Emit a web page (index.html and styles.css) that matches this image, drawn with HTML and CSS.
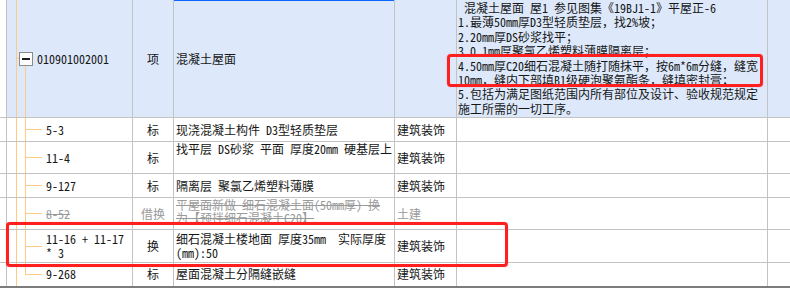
FILE: index.html
```html
<!DOCTYPE html>
<html lang="zh-CN">
<head>
<meta charset="utf-8">
<title>清单</title>
<link rel="stylesheet" href="styles.css">
</head>
<body>
<div class="page">
  <div class="grid">
    <div class="row head">
      <div class="cell gutter"></div>
      <div class="cell code parent"><span class="toggle"><span class="minus"></span></span><span class="code-text">010901002001</span></div>
      <div class="cell type">项</div>
      <div class="cell name active">混凝土屋面</div>
      <div class="cell major"></div>
      <div class="cell desc"><span class="line"> 混凝土屋面 屋1 参见图集《19BJ1-1》平屋正-6</span><span class="line">1.最薄50mm厚D3型轻质垫层，找2%坡；</span><span class="line">2.20mm厚DS砂浆找平；</span><span class="line">3.0.1mm厚聚氯乙烯塑料薄膜隔离层；</span><span class="line">4.50mm厚C20细石混凝土随打随抹平，按6m*6m分缝，缝宽</span><span class="line">10mm，缝内下部填B1级硬泡聚氨酯条，缝填密封膏；</span><span class="line">5.包括为满足图纸范围内所有部位及设计、验收规范规定</span><span class="line">施工所需的一切工序。</span></div>
      <div class="cell extra"></div>
    </div>

    <div class="row">
      <div class="cell gutter"></div>
      <div class="cell code child">5-3</div>
      <div class="cell type">标</div>
      <div class="cell name">现浇混凝土构件 D3型轻质垫层</div>
      <div class="cell major">建筑装饰</div>
      <div class="cell desc"></div>
      <div class="cell extra"></div>
    </div>

    <div class="row">
      <div class="cell gutter"></div>
      <div class="cell code child">11-4</div>
      <div class="cell type">标</div>
      <div class="cell name top">找平层 DS砂浆 平面 厚度20mm 硬基层上</div>
      <div class="cell major">建筑装饰</div>
      <div class="cell desc"></div>
      <div class="cell extra"></div>
    </div>

    <div class="row">
      <div class="cell gutter"></div>
      <div class="cell code child">9-127</div>
      <div class="cell type">标</div>
      <div class="cell name">隔离层 聚氯乙烯塑料薄膜</div>
      <div class="cell major">建筑装饰</div>
      <div class="cell desc"></div>
      <div class="cell extra"></div>
    </div>

    <div class="row muted">
      <div class="cell gutter"></div>
      <div class="cell code child"><span class="struck">8-52</span></div>
      <div class="cell type">借换</div>
      <div class="cell name top tight"><span class="struck">平屋面新做 细石混凝土面(50mm厚) 换<br>为【预拌细石混凝土C20】</span></div>
      <div class="cell major">土建</div>
      <div class="cell desc"></div>
      <div class="cell extra"></div>
    </div>

    <div class="row">
      <div class="cell gutter"></div>
      <div class="cell code child two">11-16 + 11-17<br>* 3</div>
      <div class="cell type">换</div>
      <div class="cell name two">细石混凝土楼地面 厚度35mm  实际厚度<br>(mm):50</div>
      <div class="cell major">建筑装饰</div>
      <div class="cell desc"></div>
      <div class="cell extra"></div>
    </div>

    <div class="row last">
      <div class="cell gutter"></div>
      <div class="cell code child end">9-268</div>
      <div class="cell type">标</div>
      <div class="cell name">屋面混凝土分隔缝嵌缝</div>
      <div class="cell major">建筑装饰</div>
      <div class="cell desc"></div>
      <div class="cell extra"></div>
    </div>
  </div>

  <div class="mark mark-desc"></div>
  <div class="mark mark-row"></div>
</div>
</body>
</html>
```

FILE: styles.css
```css
html, body {
  margin: 0;
  padding: 0;
  background: #ffffff;
}

body {
  font-family: "Noto Sans Mono CJK SC", "Noto Sans CJK SC", monospace;
  font-size: 12px;
  color: #161616;
  overflow: hidden;
}

.page {
  position: relative;
  width: 790px;
  height: 288px;
  overflow: hidden;
}

.grid {
  display: grid;
  grid-template-columns: 7px 126px 41px 221px 62px 311px 1fr;
  grid-template-rows: 118px 24px 32px 24px 32px 33px 23px;
  border-bottom: 3px solid #7c7c7c;
}

.row {
  display: contents;
}

.cell {
  box-sizing: border-box;
  border-right: 1px solid #c3c3c3;
  border-bottom: 1px solid #c3c3c3;
  display: flex;
  align-items: center;
  white-space: pre;
  line-height: 14px;
  background-color: #ffffff;
  min-width: 0;
}

.row.last .cell {
  border-bottom: none;
  padding-bottom: 2px;
}

.row.head .cell {
  background-color: #dde9fb;
}

.row.head .cell.gutter {
  background-color: #ffffff;
}

.cell.extra {
  border-right: none;
}

.cell.type {
  justify-content: center;
}

.cell.name {
  padding-left: 2px;
}

.cell.name.top {
  align-items: flex-start;
}

.cell.name.tight {
  line-height: 13px;
}

.cell.two {
  line-height: 14.5px;
}

.cell.major {
  padding-left: 2px;
}

.cell.name.active {
  box-shadow: inset 0 1px 0 #0a66ff;
}

.cell.desc {
  flex-direction: column;
  align-items: flex-start;
  justify-content: flex-start;
  padding-left: 1px;
  padding-top: 1px;
  line-height: 14.4px;
}

.line {
  display: block;
}

/* tree connectors */
.cell.code {
  --tree: #ffca85;
}

.cell.code.parent {
  padding-left: 12px;
  gap: 4px;
  background-image:
    linear-gradient(var(--tree), var(--tree)),
    linear-gradient(var(--tree), var(--tree)),
    linear-gradient(var(--tree), var(--tree));
  background-size: 1px 100%, 3px 1px, 1px 60px;
  background-position: 9px 0, 9px 58px, 18px 65px;
  background-repeat: no-repeat;
}

.toggle {
  box-sizing: border-box;
  width: 14px;
  height: 14px;
  border: 1px solid #8a8a8a;
  background: #ffffff;
  display: flex;
  align-items: center;
  justify-content: center;
  flex: none;
}

.minus {
  width: 8px;
  height: 2px;
  background: #202020;
}

.cell.code.child {
  padding-left: 39px;
  background-image:
    linear-gradient(var(--tree), var(--tree)),
    linear-gradient(var(--tree), var(--tree)),
    linear-gradient(var(--tree), var(--tree));
  background-size: 1px 100%, 1px 100%, 17px 1px;
  background-position: 9px 0, 18px 0, 18px center;
  background-repeat: no-repeat;
}

.cell.code.child.end {
  background-size: 1px 100%, 1px 50%, 17px 1px;
}

/* borrowed / struck row */
.row.muted .cell {
  color: #9a9a9a;
}

.struck {
  text-decoration: line-through;
  text-decoration-color: #9a9a9a;
}

/* red annotation boxes */
.mark {
  position: absolute;
  box-sizing: border-box;
  border: 3px solid #ff1f1f;
  border-radius: 4px;
  box-shadow: 0 0 1px rgba(255, 40, 40, 0.6);
}

.mark-desc {
  left: 447px;
  top: 54px;
  width: 316px;
  height: 33px;
}

.mark-row {
  left: 6px;
  top: 222px;
  width: 502px;
  height: 45px;
}
```
